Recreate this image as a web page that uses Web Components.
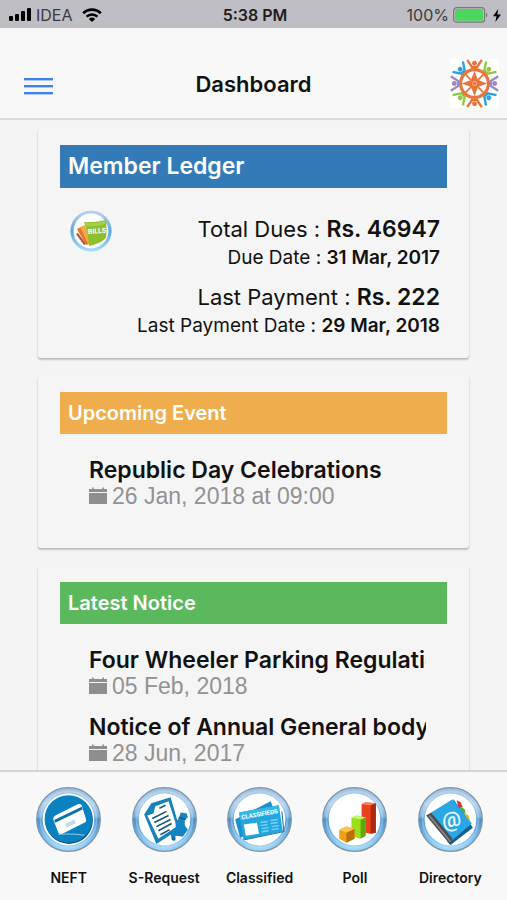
<!DOCTYPE html>
<html lang="en">
<head>
<meta charset="utf-8">
<meta name="viewport" content="width=device-width, initial-scale=1">
<title>Dashboard</title>
<style>
  :root {
    --color-page: #f4f4f4;
    --color-bar: #f8f8f8;
    --color-rule: #d4d4d5;
    --color-fg: #111;
    --color-muted: #929292;
    --color-accent: #3f82ee;
    --font-ui: Inter, Roboto, sans-serif;
    --font-date: "Liberation Sans", Arial, sans-serif;
  }
  body {
    margin: 0;
    height: 100vh;
    display: flex;
    flex-direction: column;
    background: var(--color-page);
    color: var(--color-fg);
    font-family: var(--font-ui);
  }
  main {
    flex: 1;
    min-height: 0;
    overflow-y: auto;
    scrollbar-width: none;
    padding: 8px 38px 17px;
    display: flex;
    flex-direction: column;
    gap: 17px;
  }
</style>
</head>
<body>
<status-bar>
  <span slot="carrier">IDEA</span>
  <span slot="time">5:38 PM</span>
  <span slot="charge">100%</span>
</status-bar>
<app-header>Dashboard</app-header>

<main>
  <dash-card style="--band: #337ab7" size="large">
    <span slot="title">Member Ledger</span>
    <member-ledger>
      <ledger-entry>
        <span slot="label">Total Dues :</span><span slot="amount">Rs. 46947</span>
        <span slot="date-label">Due Date :</span><span slot="date">31 Mar, 2017</span>
      </ledger-entry>
      <ledger-entry>
        <span slot="label">Last Payment :</span><span slot="amount">Rs. 222</span>
        <span slot="date-label">Last Payment Date :</span><span slot="date">29 Mar, 2018</span>
      </ledger-entry>
    </member-ledger>
  </dash-card>

  <dash-card style="--band: #f0ad4e">
    <span slot="title">Upcoming Event</span>
    <dated-item>Republic Day Celebrations<span slot="date">26 Jan, 2018 at 09:00</span></dated-item>
  </dash-card>

  <dash-card style="--band: #5cb85c">
    <span slot="title">Latest Notice</span>
    <dated-item>Four Wheeler Parking Regulations<span slot="date">05 Feb, 2018</span></dated-item>
    <dated-item>Notice of Annual General body<span slot="date">28 Jun, 2017</span></dated-item>
  </dash-card>
</main>

<tab-bar>
  <tab-item icon="neft">NEFT</tab-item>
  <tab-item icon="request">S-Request</tab-item>
  <tab-item icon="classified">Classified</tab-item>
  <tab-item icon="poll">Poll</tab-item>
  <tab-item icon="directory">Directory</tab-item>
</tab-bar>

<script>
// Registers an element whose shadow root is filled once from a template.
function define(name, css, html) {
  const template = document.createElement("template");
  template.innerHTML = `<style>${css}</style>${html}`;
  customElements.define(name, class extends HTMLElement {
    constructor() {
      super();
      this.attachShadow({ mode: "open" }).append(template.content.cloneNode(true));
    }
  });
}

define("status-bar", `
  :host {
    display: grid;
    grid-template-columns: 1fr auto 1fr;
    align-items: center;
    height: 28px;
    flex: none;
    padding: 2px 6px 0 9px;
    box-sizing: border-box;
    background: #bfbec4;
    font-size: 16px;
  }
  .side { display: flex; align-items: center; gap: 4px; color: #3a3a3d; }
  .side.end { justify-content: flex-end; }
  .time { font-weight: 600; color: #1d1d1f; }
  svg { flex: none; display: block; }
  .wifi { margin-left: 5px; }
`, `
  <div class="side">
    <svg width="23" height="14" viewBox="0 0 23 14" fill="#000">
      <rect x="0" y="8" width="4" height="5" rx="1"/><rect x="6" y="6" width="4" height="7" rx="1"/>
      <rect x="12" y="3" width="4" height="10" rx="1"/><rect x="18" y="0" width="4" height="13" rx="1"/>
    </svg>
    <slot name="carrier"></slot>
    <svg class="wifi" width="20" height="14" viewBox="0 0 20 14" fill="none" stroke="#000" stroke-width="2.6">
      <path d="M1.2 5.2a12.6 12.6 0 0 1 17.6 0M4.6 8.6a7.8 7.8 0 0 1 10.8 0"/>
      <path d="M10 14 6.8 10.9a4.6 4.6 0 0 1 6.4 0Z" fill="#000" stroke="none"/>
    </svg>
  </div>
  <div class="time"><slot name="time"></slot></div>
  <div class="side end">
    <slot name="charge"></slot>
    <svg width="36" height="16" viewBox="0 0 36 16">
      <rect x="0.6" y="0.6" width="31" height="14.6" rx="3" fill="none" stroke="#77777c" stroke-width="1.2"/>
      <rect x="2" y="2" width="28" height="11.8" rx="1.6" fill="#4cd75f"/>
      <path d="M33 5.4a3 3 0 0 1 0 5Z" fill="#77777c"/>
    </svg>
    <svg width="8" height="13" viewBox="0 0 8 13"><path d="M5.2 0 0 7.2h3.4L2.4 13 8 5.4H4.4Z"/></svg>
  </div>
`);

// Eight people with raised arms stand round the wheel, one every 45 degrees.
const PEOPLE = ["#e8743b", "#8fc941", "#9a86c4", "#2b9fe0", "#e8743b", "#8fc941", "#9a86c4", "#2b9fe0"];
const people = PEOPLE.map((color, i) => `
  <g transform="rotate(${i * 45} 25 25)" stroke="${color}" fill="${color}">
    <path d="M17.500 .8 22.600 8.400h4.800L32.500 .8" fill="none" stroke-width="2.4"/>
    <circle cx="25" cy="4.400" r="2.500" stroke="none"/>
  </g>`).join("");

define("app-header", `
  :host {
    display: grid;
    grid-template-columns: 1fr auto 1fr;
    align-items: center;
    height: 92px;
    flex: none;
    box-sizing: border-box;
    padding: 21px 8px 0;
    background: var(--color-bar);
    border-bottom: 2px solid #dcdcdc;
  }
  button {
    justify-self: start;
    margin-left: 16px;
    padding: 4px 0 0;
    border: 0;
    background: none;
    color: var(--color-accent);
    cursor: pointer;
  }
  h1 { margin: 0; font-size: 22px; line-height: 28px; font-weight: 600; }
  svg { display: block; }
  .logo { justify-self: end; }
`, `
  <button type="button" aria-label="Menu">
    <svg width="29" height="20" viewBox="0 0 29 20" fill="currentColor">
      <rect y="2" width="29" height="2.4"/><rect y="9" width="29" height="2.4"/><rect y="16" width="29" height="2.4"/>
    </svg>
  </button>
  <h1><slot></slot></h1>
  <svg class="logo" width="49" height="49" viewBox="0 0 50 50" role="img" aria-label="Society logo">
    <rect width="50" height="50" fill="#fff"/>
    ${people}
    <circle cx="25" cy="25" r="14.200" fill="#fff" stroke="#e8743b" stroke-width="3.200"/>
    <path d="M16 16 34 34M34 16 16 34" stroke="#e8743b" stroke-width="1.800"/>
    <path d="m25 12 3.500 9.500L38 25l-9.500 3.500L25 38l-3.500-9.500L12 25l9.500-3.500Z" fill="#e8743b"/>
    <circle cx="25" cy="25" r="2.200" fill="none" stroke="#f7b18d"/>
  </svg>
`);

define("dash-card", `
  :host {
    display: block;
    flex: none;
    padding: 17px 22px 25px;
    background: #f5f5f5;
    border-radius: 3px;
    box-shadow: 0 2px 2px rgba(0, 0, 0, .18), 0 1px 2px rgba(0, 0, 0, .1);
  }
  :host([size="large"]) { padding-bottom: 18px; }
  h2 {
    margin: 0 0 22px;
    padding: 0 8px;
    background: var(--band);
    color: #fff;
    font-size: 20px;
    line-height: 42px;
    font-weight: 600;
  }
  :host([size="large"]) h2 { font-size: 23px; line-height: 43px; }
`, `<h2><slot name="title"></slot></h2><slot></slot>`);

define("member-ledger", `
  :host { display: flex; justify-content: space-between; align-items: flex-start; padding: 0 7px 0 10px; }
  .entries { display: flex; flex-direction: column; gap: 10px; padding-top: 4px; }
  svg { flex: none; }
`, `
  <svg width="42" height="42" viewBox="0 0 42 42" role="img" aria-label="Bills">
    <defs><linearGradient id="rim" x2="0" y2="1">
      <stop stop-color="#b5d3ed"/><stop offset=".5" stop-color="#5aa7e2"/><stop offset="1" stop-color="#a4dafa"/>
    </linearGradient></defs>
    <circle cx="21" cy="21" r="19" fill="#fff" stroke="url(#rim)" stroke-width="3.2"/>
    <path d="m6 24 2-1 8 11-2 1Z" fill="#b1532f"/>
    <path d="m7 19 4-2 8 17-3 1Z" fill="#e2763a"/>
    <path d="m10 17 5-2 6 20-3-1Z" fill="#f2ab3d"/>
    <path d="M14 12q9 1 22-2 1 11 0 18-6 6-17 8-1-14-5-24Z" fill="#8dc02d"/>
    <path d="M15 13q9 1 20-2v3q-11 3-19 2Z" fill="#a5d04b"/>
    <text x="18" y="24" fill="#fff" font-family="Roboto, sans-serif" font-size="7" font-weight="700" transform="rotate(-4 18 24)">BILLS</text>
  </svg>
  <div class="entries"><slot></slot></div>
`);

define("ledger-entry", `
  :host { display: block; text-align: right; }
  p { margin: 0; }
  .amount { font-size: 22px; line-height: 30px; }
  .amount b { font-size: 23px; }
  .date { font-size: 19px; line-height: 28px; }
  b { font-weight: 600; }
`, `
  <p class="amount"><slot name="label"></slot> <b><slot name="amount"></slot></b></p>
  <p class="date"><slot name="date-label"></slot> <b><slot name="date"></slot></b></p>
`);

define("dated-item", `
  :host { display: block; margin: 0 21px 15px 29px; }
  h3 {
    margin: 0;
    overflow: hidden;
    white-space: nowrap;
    font-size: 23px;
    line-height: 28px;
    font-weight: 600;
  }
  p {
    display: flex;
    align-items: center;
    gap: 5px;
    margin: 0;
    color: var(--color-muted);
    font-family: var(--font-date);
    font-size: 23px;
    line-height: 24px;
  }
  svg { flex: none; }
`, `
  <h3><slot></slot></h3>
  <p>
    <svg width="18" height="18" viewBox="0 0 18 18" fill="#8e8e90">
      <path d="M0 2h3V.6h1.6V2h8.8V.6H15V2h3v3H0ZM0 6h18v11H0Z"/>
    </svg>
    <slot name="date"></slot>
  </p>
`);

define("tab-bar", `
  :host {
    display: block;
    flex: none;
    background: var(--color-bar);
    border-top: 2px solid var(--color-rule);
  }
  nav { display: flex; padding: 15px 9px 13px 21px; }
`, `<nav><slot></slot></nav>`);

const ICONS = {
  neft: `
    <circle cx="32.500" cy="32.500" r="23.500" fill="#074c79"/>
    <circle cx="32" cy="31.500" r="23.500" fill="#0a82c1"/>
    <path d="m19 28 22-11q3-1 4 1l4 13q1 3-1 4L26 46q-3 1-4-1l-5-13q0-3 2-4Z" fill="#fff"/>
    <path d="m17.800 32.500 27.200-13 .9 2.700-27 13Z" fill="#0a72ad"/>
    <path d="m29 36 9-4 1 4-9 4Z" fill="#bfdcee"/>
    <path d="M22 46.500q12-1 26 1" fill="none" stroke="#8cc6e6"/>`,
  request: `
    <path d="m12 27 7-11 19-6 9 31-23 15Z" fill="#1482bd"/>
    <path d="m15 28 6-2 2-7 13-5 8 25-18 12Z" fill="#fff"/>
    <path d="m20 31 14-7M22 35l14-7M24 39l14-7M26 43l13-7M28 47l9-5M27 21l6-3" stroke="#16577c" stroke-width="1.600"/>
    <path d="m46 31 2-6 6 1 1 4-3 2v6l3 4-5 7-6-1-5 3-1-5 5-5v-6Z" fill="#1484c2"/>
    <circle cx="41" cy="51" r="2" fill="#0d6da3"/>
    <path d="m46 30 7 2" stroke="#0b5f90" stroke-width="1.500"/>`,
  classified: `
    <path d="m8 32 35-18 7 18-37 18Z" fill="#1d8fc9"/>
    <path d="m12 25 39-7 4 26-39 8Z" fill="#22a6df"/>
    <path d="m12 25 39-7 1 7-39 8Z" fill="#35b7ec"/>
    <text x="14.500" y="32" fill="#fff" font-family="Roboto, sans-serif" font-size="6" font-weight="700" transform="rotate(-10 14.500 32)">CLASSIFIEDS</text>
    <path d="m16.500 37 13-2 2 11-13 2Z" fill="#fff"/>
    <path d="m33 35 7-1M33 38l7-1M34 41l7-1M34 44l7-1M43 33l7-1M43 36l7-1M44 39l7-1M44 42l7-1" stroke="#7dd3f5" stroke-width="1.400"/>
    <path d="m54 24 2 20-39 8" fill="none" stroke="#1677a8"/>`,
  poll: `
    <path d="m39 17 4-2 10 1v29l-6 1-8-2Z" fill="#e8431c"/>
    <path d="m48 17 5-1v29l-5 1Z" fill="#a92b10"/><path d="m39 17 4-2 10 1-5 2Z" fill="#f4845c"/>
    <path d="m29 30 5-2 9 2v18l-6 3-8-3Z" fill="#99e01a"/>
    <path d="m38 31 5-1v18l-5 3Z" fill="#5ba90c"/><path d="m29 30 5-2 9 2-5 2Z" fill="#c8f56c"/>
    <path d="m17 42 7-3 8 2v10l-8 4-7-4Z" fill="#eda11b"/>
    <path d="m24 45 8-4v10l-8 4Z" fill="#bb6f08"/><path d="m17 42 7-3 8 2-8 4Z" fill="#fbc34d"/>`,
  directory: `
    <path d="m38 13 4 2 2 5-4 1Z" fill="#d9302b"/><path d="m41 19 5 3 1 5-4 1Z" fill="#4cab48"/>
    <path d="m45 25 5 3 1 5-5 1Z" fill="#f0b323"/>
    <path d="m35 12 19 28-22 17-3-3Z" fill="#145e8e"/>
    <path d="m13 25 21-13 19 24-21 18Z" fill="#29a7e4"/>
    <path d="m8 28 5-3 21 26-2 6Z" fill="#4c4c50"/>
    <path d="m11 28 21 26" stroke="#8a8a8e" stroke-width="1.500"/>
    <text x="33" y="39" fill="#e6f6ff" font-family="Roboto, sans-serif" font-size="21" text-anchor="middle" transform="rotate(-10 33 33)">@</text>`,
};

const TAB_CSS = `
  :host { display: block; flex: 1 1 0; min-width: 0; }
  a {
    display: flex;
    flex-direction: column;
    align-items: center;
    gap: 17px;
    color: inherit;
    text-decoration: none;
    font-size: 14px;
    line-height: 18px;
    font-weight: 600;
    white-space: nowrap;
  }
  svg { display: block; }
`;

class TabItem extends HTMLElement {
  constructor() {
    super();
    this.attachShadow({ mode: "open" });
  }

  connectedCallback() {
    const icon = this.getAttribute("icon");
    this.shadowRoot.innerHTML = `<style>${TAB_CSS}</style>
      <a href="#${icon}">
        <svg width="65" height="65" viewBox="0 0 64 64" aria-hidden="true">
          <defs><linearGradient id="ring" x2="0" y2="1">
            <stop stop-color="#9dbfdf"/><stop offset=".25" stop-color="#b3d3ee"/>
            <stop offset=".45" stop-color="#7fb3de"/><stop offset=".5" stop-color="#4a8fc9"/>
            <stop offset=".8" stop-color="#7dbdeb"/><stop offset="1" stop-color="#a6dcfb"/>
          </linearGradient></defs>
          <circle cx="32" cy="32" r="31.300" fill="url(#ring)" stroke="#7d93a8" stroke-width="1.200"/>
          <circle cx="32" cy="32" r="27.500" fill="none" stroke="#d5ebfb" stroke-opacity=".35" stroke-width="2"/>
          <circle cx="32" cy="32" r="25.500" fill="#fff"/>
          ${ICONS[icon] ?? ""}
        </svg>
        <slot></slot>
      </a>`;
  }
}
customElements.define("tab-item", TabItem);
</script>
</body>
</html>
